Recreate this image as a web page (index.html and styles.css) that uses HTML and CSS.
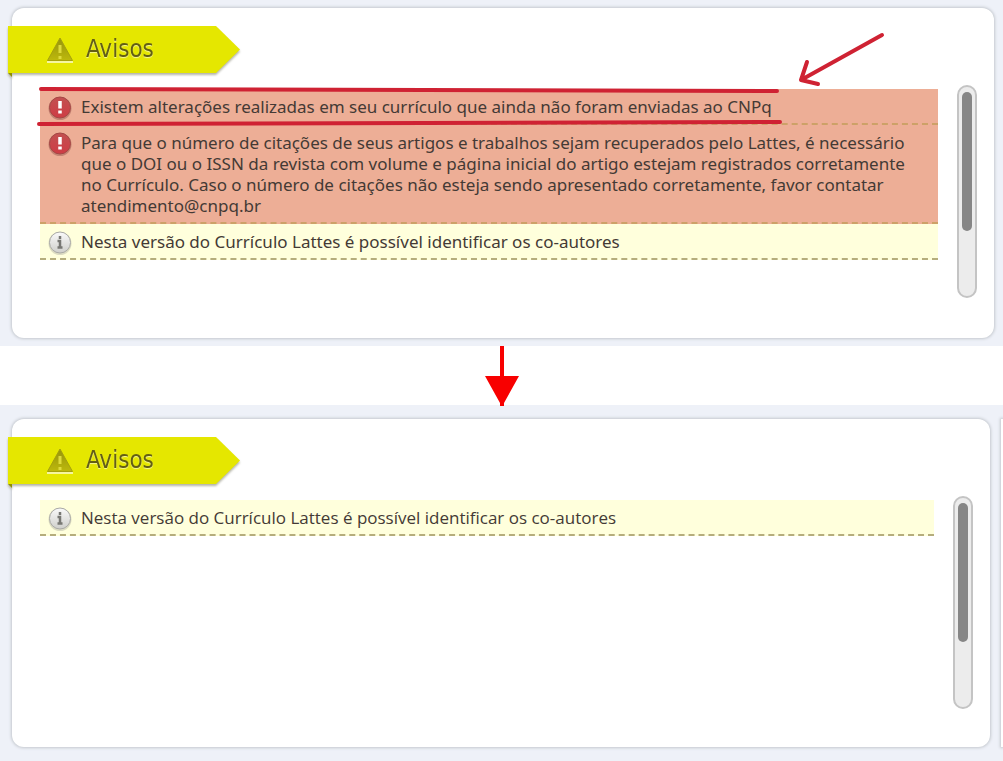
FILE: index.html
```
<!DOCTYPE html>
<html lang="pt-BR">
<head>
  <meta charset="UTF-8" />
  <meta name="viewport" content="width=device-width, initial-scale=1.0"/>
  <title>Avisos - Currículo Lattes</title>
  <link rel="stylesheet" href="styles.css">
</head>
<body>
  <svg class="defs" aria-hidden="true">
    <defs>
      <linearGradient id="red" x1="0" y1="0" x2="0" y2="1">
        <stop offset="0" stop-color="#c25050"/>
        <stop offset="1" stop-color="#cf3c45"/>
      </linearGradient>
      <linearGradient id="silver" x1="0" y1="0" x2="0" y2="1">
        <stop offset="0" stop-color="#fafafa"/>
        <stop offset="1" stop-color="#cfcfcb"/>
      </linearGradient>
      <linearGradient id="olive" x1="0" y1="0" x2="0" y2="1">
        <stop offset="0" stop-color="#96930c"/>
        <stop offset="1" stop-color="#bdb90c"/>
      </linearGradient>
    </defs>
    <symbol id="warning" viewBox="0 0 28 26">
      <path d="M1 25H27" stroke="#f6f6a0" stroke-width="2"/>
      <path d="M14 1L26.500 23.500H1.500Z" fill="url(#olive)" stroke="#a5a10e" stroke-linejoin="round"/>
      <path d="M14 8V16M14 19V22" stroke="#dedb3c" stroke-width="3"/>
    </symbol>
    <symbol id="error" viewBox="0 0 24 24">
      <circle cx="12" cy="12.500" r="11.500" fill="#a9675c" opacity=".6"/>
      <circle cx="12" cy="11.500" r="10.500" fill="url(#red)" stroke="#a54745"/>
      <path d="M12 5V12.500M12 14.500V17.500" stroke="#fff" stroke-width="3.500"/>
    </symbol>
    <symbol id="info" viewBox="0 0 24 24">
      <circle cx="12" cy="12.500" r="11.500" fill="#b9b9a8" opacity=".5"/>
      <circle cx="12" cy="11.500" r="10.500" fill="url(#silver)" stroke="#aaaaa6"/>
      <path d="M12 5V8M9.500 10H12V17M9.500 16.500H14.500" fill="none" stroke="#777773" stroke-width="2.500"/>
    </symbol>
  </svg>

  <section class="shot">
    <div class="panel">
      <h2 class="ribbon">
        <span class="ribbon-label"><svg class="warning"><use href="#warning"/></svg>Avisos</span>
      </h2>
      <div class="content">
        <ul class="notices">
          <li class="notice error">
            <svg class="icon"><use href="#error"/></svg>
            <p>Existem alterações realizadas em seu currículo que ainda não foram enviadas ao CNPq</p>
            <svg class="marks" viewBox="0 0 860 106" aria-hidden="true">
              <g fill="none" stroke="#cf2233" stroke-width="4" stroke-linecap="round" stroke-linejoin="round">
                <path d="M4 59L740 61"/>
                <path d="M2 94L743 92"/>
                <path d="M845 5L764 50M770 32L764 50L781 54"/>
              </g>
            </svg>
          </li>
          <li class="notice error">
            <svg class="icon"><use href="#error"/></svg>
            <p>Para que o número de citações de seus artigos e trabalhos sejam recuperados pelo Lattes, é necessário<br>
            que o DOI ou o ISSN da revista com volume e página inicial do artigo estejam registrados corretamente<br>
            no Currículo. Caso o número de citações não esteja sendo apresentado corretamente, favor contatar<br>
            atendimento@cnpq.br</p>
          </li>
          <li class="notice info">
            <svg class="icon"><use href="#info"/></svg>
            <p>Nesta versão do Currículo Lattes é possível identificar os co-autores</p>
          </li>
        </ul>
        <div class="scroll"><div class="thumb"></div></div>
      </div>
    </div>
  </section>

  <div class="step">
    <svg width="36" height="60" viewBox="0 0 36 60">
      <path d="M16 0H20V30H35L20 57V60H16V57L1 30H16Z" fill="#f80000"/>
    </svg>
  </div>

  <section class="shot after">
    <div class="panel">
      <h2 class="ribbon">
        <span class="ribbon-label"><svg class="warning"><use href="#warning"/></svg>Avisos</span>
      </h2>
      <div class="content">
        <ul class="notices">
          <li class="notice info">
            <svg class="icon"><use href="#info"/></svg>
            <p>Nesta versão do Currículo Lattes é possível identificar os co-autores</p>
          </li>
        </ul>
        <div class="scroll"><div class="thumb"></div></div>
      </div>
    </div>
    <div class="panel next"></div>
  </section>
</body>
</html>
```

FILE: styles.css
```
* {
  box-sizing: border-box;
}

body {
  margin: 0;
  background: #fff;
  color: #443a35;
  font-family: "Noto Sans", Tahoma, sans-serif;
  font-size: 17px;
  line-height: 21px;
}

.defs {
  position: absolute;
  width: 0;
  height: 0;
}

.shot {
  display: flex;
  padding: 8px 9px 8px 12px;
  background: #eef1f8;
  overflow: hidden;
}

.panel {
  flex: 1;
  min-width: 0;
  padding: 18px 17px 40px 0;
  background: #fff;
  border-radius: 12px;
  box-shadow: 0 0 3px 1px #c4c8ce;
}

.ribbon {
  width: 232px;
  margin: 0 0 12px -4px;
  font-family: Tahoma, "DejaVu Sans Condensed", sans-serif;
  font-size: 24px;
  font-weight: normal;
  line-height: 47px;
  color: #635f14;
  text-shadow: 0 1px 1px #f6f69a;
  filter: drop-shadow(0 2px 1px #b5b5a8);
}

.ribbon-label {
  display: flex;
  align-items: center;
  gap: 12px;
  padding-left: 38px;
  background: #e5e700;
  clip-path: polygon(0 0, 208px 0, 100% 50%, 208px 100%, 0 100%);
}

/* folded corner behind the panel edge */
.ribbon::after {
  content: "";
  position: absolute;
  top: 100%;
  left: 0;
  border-top: 4px solid #8f9000;
  border-left: 4px solid transparent;
}

.warning {
  width: 28px;
  height: 26px;
}

.content {
  display: flex;
  align-items: flex-start;
  gap: 19px;
}

.notices {
  flex: 1;
  margin: 4px 0 0 28px;
  padding: 0;
  list-style: none;
}

.notice {
  position: relative;
  display: flex;
  gap: 9px;
  padding: 7px 8px 6px;
  border-bottom: 2px dashed #b5ad7c;
}

.notice p {
  margin: 0;
  white-space: nowrap;
}

.error {
  background: #edae96;
  border-bottom-color: #cda168;
}

.info {
  background: #ffffdc;
}

.icon {
  flex: none;
  width: 24px;
  height: 24px;
  margin-bottom: -3px;
}

/* hand-drawn highlight over the first notice */
.marks {
  position: absolute;
  top: -59px;
  left: -3px;
  width: 860px;
  height: 106px;
  z-index: 1;
}

.scroll {
  width: 20px;
  height: 213px;
  padding: 5px 3px;
  background: #ececec;
  border: 2px solid #c4c4c4;
  border-radius: 10px;
}

.thumb {
  height: 139px;
  background: #868686;
  border-radius: 5px;
}

.step {
  display: flex;
  justify-content: center;
  height: 59px;
}

.step svg {
  position: relative;
}

.after {
  gap: 11px;
  padding: 14px 0;
  font-family: "Open Sans", Tahoma, sans-serif;
}

.after .panel {
  margin-left: 12px;
  padding-bottom: 38px;
}

.after .next {
  flex: none;
  width: 2px;
  margin: 0;
  padding: 0;
  border-radius: 0;
}
```
